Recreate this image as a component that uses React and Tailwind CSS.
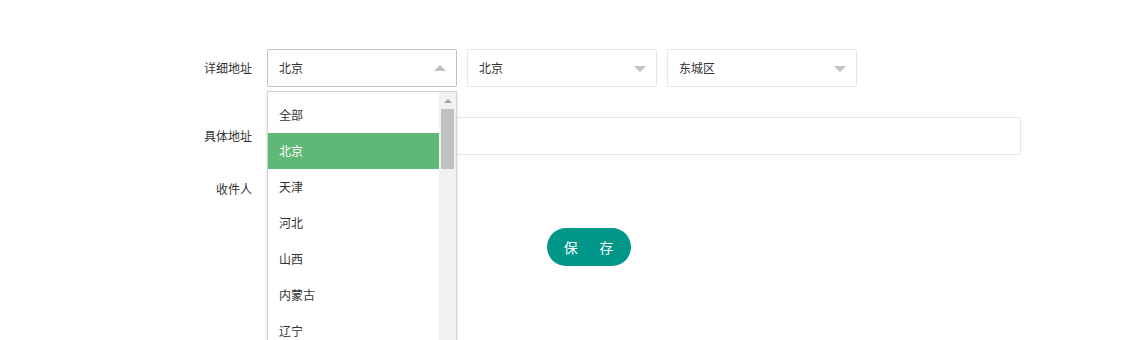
import React from 'react';

const font = { fontFamily: '"Microsoft YaHei", "Noto Sans CJK SC", "Noto Sans", sans-serif' };

const provinces = ['全部', '北京', '天津', '河北', '山西', '内蒙古', '辽宁', '吉林'];

const Caret = ({ up }) => (
    <span
        className={`absolute right-[10px] top-[16px] w-0 h-0 border-l-[6px] border-r-[6px] border-l-transparent border-r-transparent ${
            up ? 'border-b-[6px] border-b-[#c2c2c2] -mt-[1px]' : 'border-t-[6px] border-t-[#c2c2c2]'
        }`}
    />
);

const Select = ({ value, open }) => (
    <div
        className={`relative w-[190px] h-[38px] bg-white border ${
            open ? 'border-[#c2c2c2]' : 'border-[#e6e6e6]'
        } rounded-[2px] pl-[11px] flex items-center text-[12px] text-[#333]`}
    >
        {value}
        <Caret up={open} />
    </div>
);

const Dropdown = () => (
    <div className="absolute left-0 top-[42px] w-[190px] h-[260px] bg-white border border-[#d2d2d2] shadow-[0_2px_4px_rgba(0,0,0,0.12)] flex overflow-hidden z-10">
        <div className="flex-1 pt-[5px]">
            {provinces.map((p) => (
                <div
                    key={p}
                    className={`h-[36px] pl-[11px] flex items-center text-[12px] ${
                        p === '北京' ? 'bg-[#5fb878] text-white' : 'text-[#333]'
                    }`}
                >
                    {p}
                </div>
            ))}
        </div>
        <div className="w-[17px] bg-[#f1f1f1] flex flex-col items-center">
            <span className="mt-[7px] w-0 h-0 border-l-[4px] border-r-[4px] border-b-[4px] border-l-transparent border-r-transparent border-b-[#a3a3a3]" />
            <div className="mt-[6px] w-[13px] h-[60px] bg-[#c1c1c1]" />
        </div>
    </div>
);

const Row = ({ label, children, className }) => (
    <div className={`flex items-center ${className}`}>
        <label className="w-[80px] mr-[15px] text-right text-[12px] text-[#333]">{label}</label>
        {children}
    </div>
);

export default function App() {
    return (
        <div className="w-[1142px] h-[340px] bg-white overflow-hidden pt-[49px] pl-[172px]" style={font}>
            <Row label="详细地址" className="h-[38px]">
                <div className="relative">
                    <Select value="北京" open />
                    <Dropdown />
                </div>
                <div className="ml-[10px]">
                    <Select value="北京" />
                </div>
                <div className="ml-[10px]">
                    <Select value="东城区" />
                </div>
            </Row>
            <Row label="具体地址" className="h-[38px] mt-[30px]">
                <div className="w-[754px] h-[38px] border border-[#e6e6e6] rounded-[2px]" />
            </Row>
            <Row label="收件人" className="h-[38px] mt-[15px]">
                <div className="w-[190px] h-[38px]" />
            </Row>
            <div className="mt-[20px] ml-[375px]">
                <button className="w-[84px] h-[38px] rounded-full bg-[#009688] text-white text-[14px] tracking-[1px]">
                    保&nbsp;&nbsp;&nbsp;&nbsp;&nbsp;存
                </button>
            </div>
        </div>
    );
}
